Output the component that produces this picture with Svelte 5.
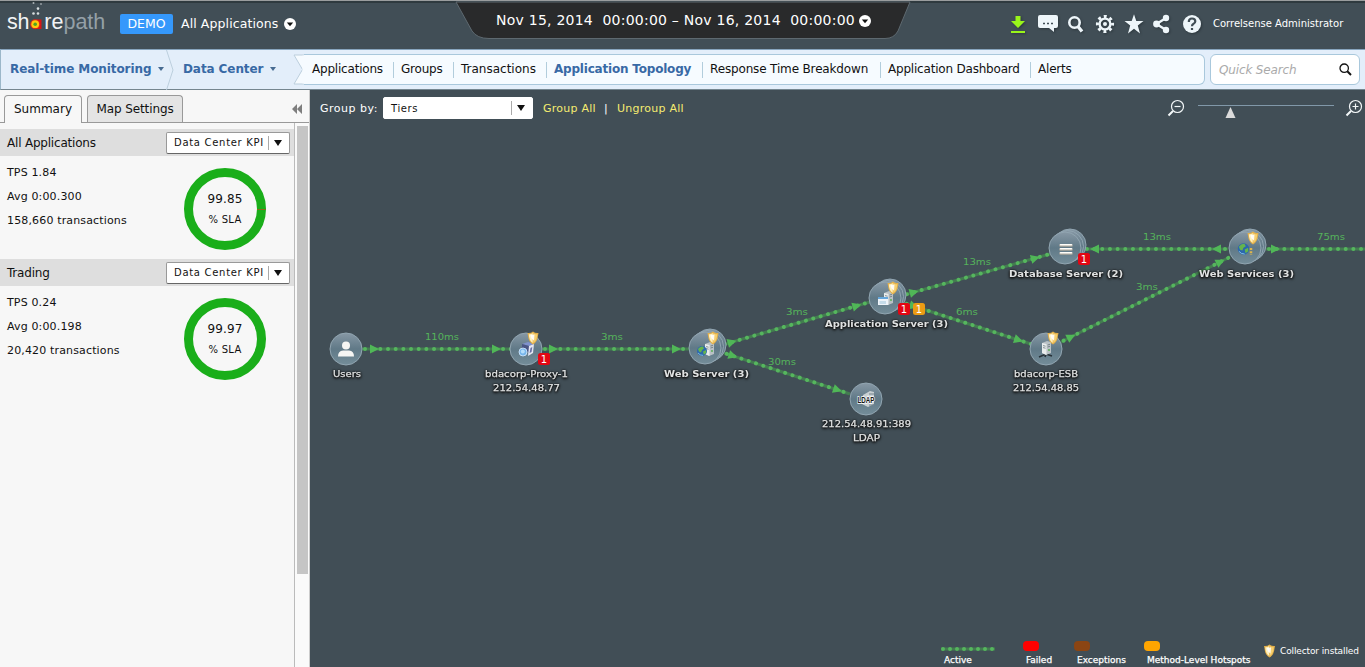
<script>
  const sections = ['Applications', 'Groups', 'Transactions', 'Application Topology', 'Response Time Breakdown', 'Application Dashboard', 'Alerts'];

  const kpis = [
    { name: 'All Applications', tps: '1.84', avg: '0:00.300', count: '158,660', sla: '99.85', miss: true },
    { name: 'Trading', tps: '0.24', avg: '0:00.198', count: '20,420', sla: '99.97', miss: false }
  ];

  // arrows: distance of each arrow tip from the start of the edge
  const edges = [
    { x1: 362, y1: 349, x2: 511, y2: 349, arrows: [17, 139], label: '110ms', lx: 425, ly: 340, lw: 34 },
    { x1: 542, y1: 349, x2: 690, y2: 349, arrows: [16, 139], label: '3ms', lx: 601, ly: 340, lw: 22 },
    { x1: 722, y1: 345, x2: 870, y2: 302, arrows: [15, 145], label: '3ms', lx: 786, ly: 315, lw: 22 },
    { x1: 724, y1: 353, x2: 850, y2: 394, arrows: [14, 124], label: '30ms', lx: 768, ly: 365, lw: 28 },
    { x1: 904, y1: 295, x2: 1050, y2: 254, arrows: [15, 141], label: '13ms', lx: 963, ly: 265, lw: 28 },
    { x1: 904, y1: 303, x2: 1031, y2: 344, arrows: [15, 125], label: '6ms', lx: 956, ly: 315, lw: 22 },
    { x1: 1228, y1: 249, x2: 1084, y2: 249, arrows: [16, 138], label: '13ms', lx: 1143, ly: 240, lw: 28 },
    { x1: 1061, y1: 342, x2: 1230, y2: 257, arrows: [16, 183], label: '3ms', lx: 1136, ly: 290, lw: 22 },
    { x1: 1266, y1: 249, x2: 1370, y2: 249, arrows: [14], label: '75ms', lx: 1317, ly: 240, lw: 28 }
  ].map((e) => ({
    ...e,
    len: Math.hypot(e.x2 - e.x1, e.y2 - e.y1),
    angle: (Math.atan2(e.y2 - e.y1, e.x2 - e.x1) * 180) / Math.PI
  }));

  const nodes = [
    { x: 346, y: 349, kind: 'user', lines: [['Users', 333, 28]] },
    { x: 526, y: 349, kind: 'proxy', shield: [533, 338], lines: [['bdacorp-Proxy-1', 485, 83], ['212.54.48.77', 493, 67]], failed: [544, 359] },
    { x: 705, y: 348, stack: true, kind: 'web', shield: [713, 338], lines: [['Web Server (3)', 664, 85]] },
    { x: 885, y: 298, stack: true, kind: 'app', shield: [893, 288], lines: [['Application Server (3)', 825, 123]], failed: [904, 309], hot: [919, 309] },
    { x: 866, y: 399, kind: 'ldap', lines: [['212.54.48.91:389', 822, 89], ['LDAP', 853, 27]] },
    { x: 1065, y: 248, stack: true, kind: 'db', lines: [['Database Server (2)', 1009, 114]], failed: [1084, 259] },
    { x: 1046, y: 349, kind: 'esb', shield: [1053, 338], lines: [['bdacorp-ESB', 1014, 64], ['212.54.48.85', 1013, 66]] },
    { x: 1245, y: 248, stack: true, kind: 'services', shield: [1253, 238], lines: [['Web Services (3)', 1199, 95]] }
  ];
</script>

{#snippet shieldIcon()}
  <path d="M0,-6.5 Q2,-4.7 5.5,-5 L5,-2.5 Q4.5,4 0,6.5 Q-4.5,4 -5,-2.5 L-5.5,-5 Q-2,-4.7 0,-6.5Z" fill="#e3b04a" />
  <path d="M-.3,-5 Q-2,-3.7 -4.2,-3.8 Q-4,2.5 -.3,5Z" fill="#fff1bf" />
  <path d="M.3,-5 Q2,-3.7 4.2,-3.8 Q4,2.5 .3,5Z" fill="#f6d070" />
  <path d="M-2.5,-3 L1.5,-3.5 L1,2.4 Q-2,1.2 -2.5,-3Z" fill="#fff" opacity=".9" />
{/snippet}

{#snippet globe()}
  <circle r="5" fill="#2b68ae" />
  <path d="M-4,-2 Q-2,-5 1,-4.4 L2,-2.4 L0,-1 L-1,1.4 L-3,.6Z M1,.4 L4,-1 L4.2,2 L1.8,3.8Z" fill="#65b54d" />
  <path d="M-4,2 Q-2,4.5 1,4.4" fill="none" stroke="#8cc9e8" stroke-width=".8" />
{/snippet}

{#snippet server()}
  <path d="M0,1 L5,-1 L9,0 L9,11 L4,13 L0,11Z" fill="#b9c1c5" />
  <path d="M0,1 L4.5,2 L4.5,13 L0,11Z" fill="#e9eded" />
  <path d="M1,3.6 L3.6,4.2 M1,5.6 L3.6,6.2 M5.5,3 L8,2.3 M5.5,5 L8,4.3" stroke="#69757b" stroke-width=".8" />
  <circle cx="7" cy="8" r=".9" fill="#4fae4a" />
{/snippet}

<div class="app">
  <header>
    <div class="logo">
      <span class="sh">sh</span>
      <svg class="flower" width="12" height="36" viewBox="0 0 12 36">
        <g fill="#d8dee0"><circle cx="3.5" cy="3" r="1" opacity=".7" /><circle cx="11" cy="4" r=".9" opacity=".6" /><circle cx="8" cy="8.6" r="1.3" /><circle cx="3.5" cy="13.5" r="1.3" /><circle cx="8" cy="13.5" r="1.3" /></g>
        <path d="M7,19.5 H11.5 V29 H7Z" fill="#d81414" />
        <circle cx="5.2" cy="24.2" r="5" fill="#e2281a" /><circle cx="5.2" cy="24.2" r="3.9" fill="#ffc90d" /><circle cx="5.2" cy="24.2" r="1.8" fill="#50a51e" />
      </svg>
      <span class="re">re</span><span class="path">path</span>
    </div>
    <span class="demo">DEMO</span>
    <span class="allapps">All Applications</span>
    <svg class="drop" width="12" height="12" viewBox="0 0 12 12"><circle cx="6" cy="6" r="6" fill="#fff" /><path d="M2.8,4.4H9.2L6,8.2Z" fill="#111" /></svg>

    <div class="period">
      <svg class="tab" width="460" height="40" viewBox="0 0 460 40"><path d="M2,1 L18,30 Q23,37.5 35,37.5 H431 Q440,37.5 444,30 L456,1Z" fill="#292a2b" stroke="#5e6970" /></svg>
      <span>Nov 15, 2014&nbsp; 00:00:00 – Nov 16, 2014&nbsp; 00:00:00</span>
      <svg width="12" height="12" viewBox="0 0 12 12"><circle cx="6" cy="6" r="6" fill="#fff" /><path d="M2.8,4.4H9.2L6,8.2Z" fill="#111" /></svg>
    </div>

    <svg class="tools" width="196" height="24" viewBox="1008 12 196 24">
      <path d="M1015.5,16H1020.5V21H1025L1018,28L1011,21H1015.5Z M1011,31H1025V33H1011Z" fill="#99f51a" />
      <path d="M1040,15H1056Q1058,15 1058,17V26Q1058,28 1056,28H1054V32L1049,28H1040Q1038,28 1038,26V17Q1038,15 1040,15Z" fill="#eef6fa" />
      <path d="M1043,23.5h2m2,0h2m2,0h2" stroke="#414e56" stroke-width="1.6" />
      <circle cx="1074.5" cy="22.5" r="5.2" fill="none" stroke="#eef6fa" stroke-width="2.6" /><path d="M1078,26.5L1082,31.5" stroke="#eef6fa" stroke-width="3.4" />
      <circle cx="1105" cy="24" r="5.4" fill="none" stroke="#eef6fa" stroke-width="2.4" />
      <circle cx="1105" cy="24" r="7.6" fill="none" stroke="#eef6fa" stroke-width="3" stroke-dasharray="2.9 3.069" stroke-dashoffset="1.45" />
      <circle cx="1105" cy="24" r="2" fill="#eef6fa" />
      <path d="M1134,14.3L1136.3,21H1143.5L1137.8,25.4L1140,33.5L1134,28.8L1128,33.5L1130.2,25.4L1124.5,21H1131.7Z" fill="#eef6fa" />
      <path d="M1166,18L1156.5,24L1166,30" fill="none" stroke="#eef6fa" stroke-width="2.4" />
      <g fill="#eef6fa"><circle cx="1166" cy="18" r="3.2" /><circle cx="1156.5" cy="24" r="3.4" /><circle cx="1166" cy="30" r="3.2" /><circle cx="1192" cy="24" r="9" /></g>
      <path d="M1188.8,22Q1188.8,18.5 1192,18.5Q1195.3,18.5 1195.3,21.3Q1195.3,23 1193.3,24Q1192,24.7 1192,26.3M1192,28V30" fill="none" stroke="#414e56" stroke-width="2.2" />
    </svg>
    <span class="admin">Correlsense Administrator</span>
  </header>

  <nav>
    <span class="crumb first">Real-time Monitoring<i></i></span>
    <svg class="chev" width="8" height="40" viewBox="0 0 8 40"><path d="M.5,0L7,20L.5,40" fill="none" stroke="#bccfdd" /></svg>
    <span class="crumb second">Data Center<i></i></span>
    <div class="links">
      <svg class="notch" width="11" height="30" viewBox="0 0 11 30"><path d="M11,.5H1L9.5,15L1,29.5H11" fill="#f6fbff" stroke="#bccfdd" /><path d="M11,1V29" stroke="#f6fbff" stroke-width="3" /></svg>
      {#each sections as s, i}<span class="link l{i}" class:active={i === 3}>{s}</span>{/each}
    </div>
    <div class="search"><em>Quick Search</em><svg width="13" height="13" viewBox="0 0 13 13"><circle cx="5.2" cy="5.2" r="4.2" fill="none" stroke="#111" stroke-width="1.3" /><path d="M8.3,8.3L12,12" stroke="#111" stroke-width="2" /></svg></div>
  </nav>

  <main>
    <aside>
      <div class="tabs">
        <span class="t on">Summary</span><span class="t off">Map Settings</span>
        <svg width="10" height="10" viewBox="0 0 10 10"><path d="M5,0V10L0,5ZM10,0V10L5,5Z" fill="#7e7e7e" /></svg>
      </div>
      <div class="body">
        <div class="list">
          {#each kpis as k}
            <section>
              <div class="head"><b>{k.name}</b><div class="select kpi"><span>Data Center KPI</span><i></i></div></div>
              <div class="stats">
                <div class="nums"><span>TPS {k.tps}</span><span>Avg {k.avg}</span><span>{k.count} transactions</span></div>
                <div class="ring" class:miss={k.miss}><strong>{k.sla}</strong><small>% SLA</small></div>
              </div>
            </section>
          {/each}
        </div>
        <div class="scroll"><div></div></div>
      </div>
    </aside>

    <div class="map">
      <svg class="canvas" width="1055" height="577" viewBox="310 90 1055 577">
        <defs>
          <linearGradient id="disc" x1="0" y1="0" x2="0" y2="1"><stop offset="0" stop-color="#8798a5" /><stop offset=".5" stop-color="#607987" /><stop offset="1" stop-color="#748d99" /></linearGradient>
        </defs>
        {#each edges as e}
          <g transform="translate({e.x1} {e.y1}) rotate({e.angle})">
            <path d="M0,0H{e.len}" stroke="#437c50" stroke-width="3" />
            <path d="M3,0H{e.len}" stroke="#56b65e" stroke-width="4" stroke-linecap="round" stroke-dasharray="0 7.67" />
            {#each e.arrows as a}<path d="M{a - 9},-4.5L{a},0L{a - 9},4.5Z" fill="#50b757" />{/each}
          </g>
          <text class="ms" x={e.lx} y={e.ly} textLength={e.lw} lengthAdjust="spacingAndGlyphs">{e.label}</text>
        {/each}

        {#each nodes as n}
          {#if n.stack}
            <circle class="disc" cx={n.x + 5} cy={n.y - 3} r="16" /><circle class="disc" cx={n.x + 2.5} cy={n.y - 1.5} r="16" />
          {/if}
          <circle class="disc" cx={n.x} cy={n.y} r="16" />
          <g transform="translate({n.x} {n.y})">
            {#if n.kind === 'user'}
              <circle cy="-3.5" r="4" fill="#f5f5f3" /><path d="M-8,7.5Q-8,2 -3,1.5H3Q8,2 8,7.5Z" fill="#f5f5f3" />
            {:else if n.kind === 'proxy'}
              <path d="M-4,-5L2,-7L8,-5L3,-3Z" fill="#7f91cd" /><path d="M-4,-5L3,-3V3L-4,2Z" fill="#4a5585" /><path d="M3,-3L8,-5L7,4L2,7Z" fill="#e4e6f3" /><path d="M4.5,-1L6.3,-2L5.5,3L3.6,4Z" fill="#6670a5" /><circle cx="-3" cy="3" r="4" fill="#77b6ec" stroke="#d9ecff" stroke-width=".8" /><circle cx="-3.2" cy="2.6" r="2" fill="#b5defb" />
            {:else if n.kind === 'web'}
              <g transform="translate(0 -5)">{@render server()}</g><g transform="translate(-3 3)">{@render globe()}</g>
            {:else if n.kind === 'app'}
              <g transform="translate(-1 -6)">{@render server()}</g><path d="M-7,-1H3V7H-7Z" fill="#eef4fa" /><path d="M-7,-1H3V1H-7Z" fill="#65a7dc" /><path d="M-5.500,3H1V6H-5.500Z" fill="#c5dcea" />
            {:else if n.kind === 'ldap'}
              <path d="M-3,-4L4,-8L8,-7V5L2,8L-4,5Z" fill="#c8cfd2" /><path d="M3,-5H8M3,6H8" stroke="#75838b" stroke-width="1.2" /><text class="ldap" x="-8.5" y="4" textLength="17" lengthAdjust="spacingAndGlyphs">LDAP</text>
            {:else if n.kind === 'db'}
              <path d="M-4.500,-2.500H6.500M-4.500,1.500H6.500M-4.500,5.500H6.500" stroke="#aaa69c" stroke-width="2.600" stroke-linecap="round" /><path d="M-4.500,-3.200H6.500M-4.500,.8H6.500M-4.500,4.800H6.500" stroke="#fffefa" stroke-width="1.600" stroke-linecap="round" />
            {:else if n.kind === 'esb'}
              <path d="M-7,8L0,5L6,7M0,5L-1,8" stroke="#273138" stroke-width="1.6" fill="none" /><g transform="translate(-4 -7)">{@render server()}</g>
            {:else}
              <g transform="translate(-1.5 1) scale(1.15)">{@render globe()}</g><path d="M6,0V7" stroke="#deb64d" stroke-width="2.5" stroke-dasharray="2 1.2" />
            {/if}
          </g>
          {#if n.shield}<g transform="translate({n.shield[0]} {n.shield[1]})">{@render shieldIcon()}</g>{/if}
          {#each n.lines as l, i}<text class="name" class:bold={n.stack} x={l[1]} y={n.y + (n.stack ? 29 : 28) + i * 14} textLength={l[2]} lengthAdjust="spacingAndGlyphs">{l[0]}</text>{/each}
          {#each [[n.failed, '#e30613'], [n.hot, '#eb9c14']] as b}
            {#if b[0]}<rect x={b[0][0] - 6} y={b[0][1] - 6} width="12" height="12" rx="2.5" fill={b[1]} /><text class="count" x={b[0][0]} y={b[0][1] + 3.5}>1</text>{/if}
          {/each}
        {/each}
      </svg>

      <div class="toolbar">
        <span class="gb">Group by:</span>
        <div class="select tiers"><span>Tiers</span><i></i></div>
        <span class="ga">Group All</span><span class="bar">|</span><span class="ua">Ungroup All</span>
        <svg class="zoom" width="198" height="24" viewBox="1167 96 198 24">
          <g fill="none" stroke="#f3f7f8" stroke-width="1.2"><circle cx="1177.5" cy="106.5" r="6" /><path d="M1174.5,106.5H1180.5" /><circle cx="1355.5" cy="106.5" r="6" /><path d="M1352.5,106.5H1358.5M1355.5,103.5V109.5" /><path d="M1173,111L1168.5,115.5M1351,111L1346.5,115.5" stroke-width="2" /></g>
          <path d="M1198,105.5H1334" stroke="#8198a9" /><path d="M1230.5,107L1235.5,118H1225.5Z" fill="#dbdbdb" />
        </svg>
      </div>

      <div class="legend">
        <div class="li active-l"><svg width="55" height="8" viewBox="0 0 55 8"><path d="M0,4H54" stroke="#437c50" stroke-width="3" /><path d="M2,4H54" stroke="#56b65e" stroke-width="4" stroke-linecap="round" stroke-dasharray="0 7" /></svg><span>Active</span></div>
        <div class="li failed"><i></i><span>Failed</span></div>
        <div class="li exc"><i></i><span>Exceptions</span></div>
        <div class="li hot"><i></i><span>Method-Level Hotspots</span></div>
        <div class="coll"><svg width="13" height="14" viewBox="-6.5 -7 13 14">{@render shieldIcon()}</svg><span>Collector installed</span></div>
      </div>
    </div>
  </main>
</div>

<style>
  :global(body) { margin: 0; background: #414e56; overflow: hidden; }
  .app { width: 1365px; height: 667px; display: flex; flex-direction: column; overflow: hidden; font-family: Verdana, "DejaVu Sans", sans-serif; font-size: 12px; color: #111; white-space: nowrap; }
  .app * { box-sizing: border-box; }
  svg { display: block; flex: none; }

  header { position: relative; height: 49px; flex: none; display: flex; align-items: center; background: #414e56; border-top: 1px solid #9a9d9e; box-shadow: inset 0 2px #2f3a3f; color: #fff; }
  .logo { display: flex; width: 120px; height: 48px; padding-left: 7px; font: 21.5px/43px "Liberation Sans", Arial, sans-serif; color: #f2f4f5; }
  .sh { letter-spacing: -.2px; }
  .flower { margin: -1px 2px 0 1px; }
  .path { color: #94a0a7; }
  .demo { width: 53px; height: 20px; margin-right: 8px; background: #3598fb; border-radius: 2px; text-align: center; font-size: 12.5px; line-height: 19px; margin-top: -2px; }
  .allapps { width: 103px; font-size: 12.5px; letter-spacing: .1px; margin-top: -3px; }
  .drop { margin-top: -2px; }
  .period { position: absolute; left: 454px; top: 0; width: 460px; height: 38px; display: flex; align-items: center; padding-left: 42px; gap: 6px; font-size: 14px; }
  .period span { position: relative; width: 357px; letter-spacing: .24px; }
  .period > svg:last-child { position: relative; margin-top: 2px; }
  .tab { position: absolute; left: 0; top: 0; }
  .tools { margin-left: auto; margin-top: -2px; filter: drop-shadow(1px 1px 1px #2c373d); }
  .admin { width: 152px; margin-left: 9px; font-size: 10px; margin-top: -3px; }

  nav { height: 41px; flex: none; display: flex; align-items: center; background: #e3eefa; border-top: 1px solid #87a4bd; border-bottom: 1px solid #75868f; border-left: 1px solid #9bb7c9; }
  .crumb { display: flex; align-items: center; color: #3869a5; font-weight: bold; letter-spacing: -.09px; padding-bottom: 2px; }
  .first { width: 165px; padding-left: 9px; }
  .second { width: 119px; padding-left: 9px; }
  .crumb i { margin-left: 7px; border: 3px solid transparent; border-top: 4px solid #476b91; border-bottom: 0; }
  .links { display: flex; align-items: center; width: 912px; height: 31px; background: #f6fbff; border: 1px solid #a9c8dc; border-left: 0; border-radius: 0 6px 6px 0; }
  .notch { height: 31px; width: 11px; background: #e3eefa; }
  .link { padding-left: 7px; border-left: 1px solid #b2cddc; height: 16px; line-height: 14px; letter-spacing: -.2px; }
  .l0 { width: 89px; border: 0; padding-left: 8px; }
  .l1 { width: 60px; }
  .l2 { width: 93px; letter-spacing: 0; }
  .l3 { width: 156px; }
  .l4 { width: 178px; letter-spacing: -.15px; }
  .l5 { width: 150px; }
  .active { color: #3869a5; font-weight: bold; }
  .search { display: flex; align-items: center; justify-content: space-between; width: 150px; height: 31px; margin-left: 5px; padding: 0 7px 0 8px; background: #fff; border: 1px solid #a9c8dc; border-radius: 6px; color: #aaa; letter-spacing: -.15px; }

  main { flex: 1; display: flex; min-height: 0; }
  aside { width: 310px; flex: none; display: flex; flex-direction: column; background: #f7f7f7; border-right: 1px solid #ccc; }
  .tabs { display: flex; align-items: flex-end; height: 33px; border-bottom: 1px solid #999; padding-left: 4px; }
  .t { border: 1px solid #999; border-bottom: 0; border-radius: 4px 4px 0 0; text-align: center; height: 27px; line-height: 26px; }
  .on { width: 78px; height: 28px; margin-bottom: -1px; background: #f7f7f7; }
  .off { width: 96px; margin-left: 5px; background: #e4e4e4; letter-spacing: -.1px; }
  .tabs svg { margin: 0 7px 8px auto; }
  .body { flex: 1; display: flex; }
  .list { width: 294px; padding-top: 6px; }
  section { height: 130px; }
  .head { display: flex; align-items: center; justify-content: space-between; height: 27px; padding: 0 4px 0 7px; background: #dedede; }
  .head b { font-weight: normal; letter-spacing: -.2px; }
  .select { display: flex; align-items: center; justify-content: space-between; background: #fff; border: 1px solid #999; border-bottom-color: #666; border-radius: 2px; color: #111; }
  .kpi { width: 124px; height: 22px; padding-left: 7px; font-size: 10px; }
  .kpi span { letter-spacing: .7px; padding-bottom: 1px; }
  .select i { width: 21px; height: 14px; border-left: 1px solid #aaa; display: flex; align-items: center; padding-left: 5px; flex: none; }
  .select i::after { content: ""; border: 4px solid transparent; border-top: 6px solid #111; border-bottom: 0; }
  .stats { display: flex; justify-content: space-between; height: 103px; padding: 12px 28px 0 7px; }
  .nums { display: flex; flex-direction: column; margin-top: -7px; font-size: 11px; line-height: 24px; letter-spacing: .15px; }
  .ring { position: relative; width: 82px; height: 82px; border: 9px solid #1aae1a; border-radius: 50%; display: flex; flex-direction: column; align-items: center; padding-top: 14px; }
  .miss::after { content: ""; position: absolute; right: -9px; top: 32px; width: 9px; height: 1px; background: #856b18; }
  .ring strong { font-weight: normal; font-size: 12px; line-height: 17px; letter-spacing: .15px; }
  .ring small { font-size: 10px; line-height: 23px; letter-spacing: .3px; }
  .scroll { width: 15px; border-left: 1px solid #bbb; padding: 3px 0 0 2px; background: #fafafa; }
  .scroll div { width: 11px; height: 448px; background: #c5c5c5; }

  .map { position: relative; flex: 1; background: #414e56; display: flex; flex-direction: column; justify-content: space-between; }
  .canvas { position: absolute; left: 0; top: 0; }
  .disc { fill: url(#disc); stroke: #91a5b1; stroke-width: 1; }
  .ms { font-size: 9.5px; fill: #55b35b; }
  .name { font-size: 9.5px; fill: #e0e2e2; stroke: #e0e2e2; stroke-width: .25px; filter: drop-shadow(0 1px 1px #111) drop-shadow(0 0 1px #111); }
  .bold { font-weight: bold; stroke: none; }
  .ldap { font: bold 9px "Liberation Sans", Arial, sans-serif; fill: #151515; stroke: #fff; stroke-width: 1.5px; paint-order: stroke; }
  .count { font-size: 10px; fill: #fff; text-anchor: middle; }
  .toolbar { position: relative; display: flex; align-items: center; height: 35px; padding-left: 10px; font-size: 11px; color: #fff; }
  .toolbar > span { padding-top: 1px; }
  .gb { width: 63px; letter-spacing: .5px; }
  .tiers { width: 150px; height: 22px; padding-left: 7px; font-size: 10px; border-color: #fff; }
  .tiers span { letter-spacing: .6px; padding-top: 1px; }
  .ga, .ua { color: #f5ec70; letter-spacing: .25px; }
  .ga { margin-left: 10px; width: 61px; }
  .bar { width: 13px; }
  .zoom { margin: 0 0 0 auto; }
  .legend { position: relative; display: flex; height: 30px; padding-left: 631px; font-size: 9px; color: #fff; }
  .li { display: flex; flex-direction: column; }
  .li span { line-height: 13px; -webkit-text-stroke: .25px #fff; margin-left: 3px; }
  .li svg { margin: 8px 0 1px; }
  .li i { width: 16px; height: 10px; border-radius: 4px; margin: 4px 0 3px; }
  .active-l { width: 82px; }
  .failed { width: 51px; }
  .exc { width: 70px; }
  .hot { width: 119px; }
  .failed i { background: #f00; }
  .exc i { background: #8b4513; }
  .hot i { background: #ffa500; }
  .coll { display: flex; align-items: center; gap: 4px; height: 27px; letter-spacing: -.12px; }
</style>
